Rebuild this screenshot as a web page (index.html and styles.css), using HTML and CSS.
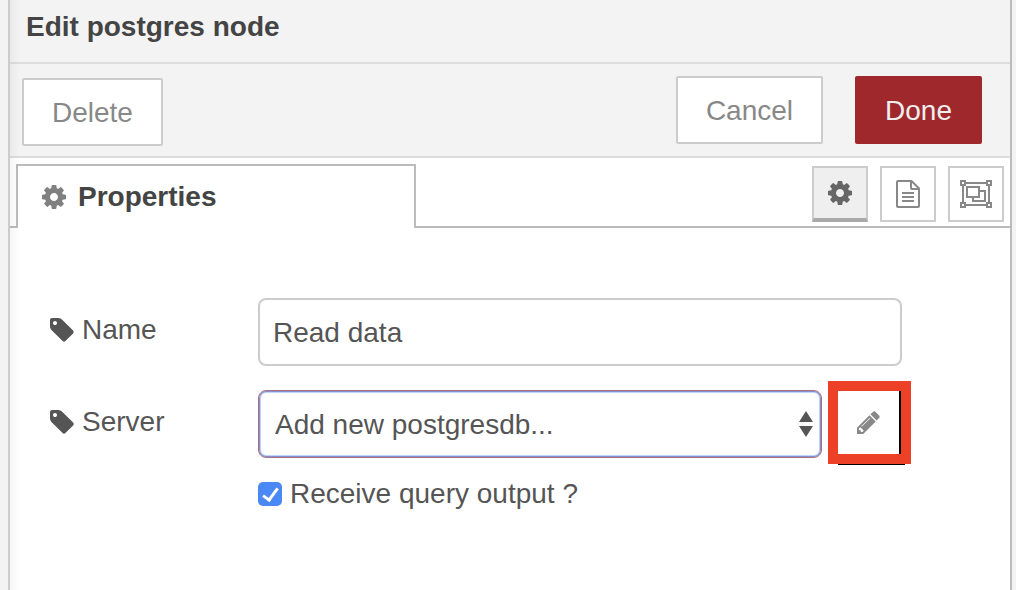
FILE: index.html
```html
<!DOCTYPE html>
<html lang="en">
<head>
<meta charset="utf-8">
<title>Edit postgres node</title>
<link rel="stylesheet" href="styles.css">
</head>
<body>
<svg class="sprite" aria-hidden="true">
  <symbol id="cog" viewBox="128 128 1536 1536"><path d="M1152 896q0-106-75-181t-181-75-181 75-75 181 75 181 181 75 181-75 75-181zm512-109v222q0 12-8 23t-20 13l-185 28q-19 54-39 91 35 50 107 138 10 12 10 25t-9 23q-27 37-99 108t-94 71q-12 0-26-9l-138-108q-44 23-91 38-16 136-29 186-7 28-36 28h-222q-14 0-24.5-8.5t-11.5-21.5l-28-184q-49-16-90-37l-141 107q-10 9-25 9-14 0-25-11-126-114-165-168-7-10-7-23 0-12 8-23 15-21 51-66.5t54-70.5q-27-50-41-99l-183-27q-13-2-21-12.5t-8-23.5v-222q0-12 8-23t19-13l186-28q14-46 39-92-40-57-107-138-10-12-10-24 0-10 9-23 26-36 98.5-107.5t94.5-71.5q13 0 26 10l138 107q44-23 91-38 16-136 29-186 7-28 36-28h222q14 0 24.5 8.5t11.5 21.5l28 184q49 16 90 37l142-107q9-9 24-9 13 0 25 10 129 119 165 170 7 8 7 22 0 12-8 23-15 21-51 66.5t-54 70.5q26 50 41 98l183 28q13 2 21 12.5t8 23.5z"/></symbol>
  <symbol id="tag" viewBox="128 128 1536 1536"><path d="M576 448q0-53-37.5-90.5t-90.5-37.5-90.5 37.5-37.5 90.5 37.5 90.5 90.5 37.5 90.5-37.5 37.5-90.5zm1067 576q0 53-37 90l-491 492q-39 37-91 37-53 0-90-37l-715-716q-38-37-64.500-101t-26.500-117v-416q0-52 38-90t90-38h416q53 0 117 26.500t102 64.500l715 714q37 39 37 91z"/></symbol>
  <symbol id="pencil" viewBox="128 128 1536 1536"><path d="M491 1536l91-91-235-235-91 91v107h128v128h107zm523-928q0-22-22-22-10 0-17 7l-542 542q-7 7-7 17 0 22 22 22 10 0 17-7l542-542q7-7 7-17zm-54-192l416 416-832 832h-416v-416zm683 96q0 53-37 90l-166 166-416-416 166-165q36-38 90-38 53 0 91 38l235 234q37 39 37 91z"/></symbol>
</svg>
<main class="tray">
  <header class="tray-header"><h1 class="title">Edit postgres node</h1></header>
  <div class="toolbar">
    <button class="btn btn-delete" type="button">Delete</button>
    <div class="toolbar-end">
      <button class="btn" type="button">Cancel</button>
      <button class="btn btn-primary" type="button">Done</button>
    </div>
  </div>
  <nav class="tabs">
    <button class="tab" type="button"><svg class="icon"><use href="#cog"/></svg>Properties</button>
    <div class="tab-actions">
      <button class="square selected" type="button" aria-label="Properties"><svg class="icon"><use href="#cog"/></svg></button>
      <button class="square" type="button" aria-label="Description">
        <svg class="icon-doc" viewBox="0 0 24 28" fill="none" stroke="currentColor" stroke-width="2"><path d="M2 1H15.500L23 8.500V26Q23 27 22 27H2Q1 27 1 26V2Q1 1 2 1Z"/><path d="M15 1V8Q15 9 16 9H23"/><path d="M6 13H18M6 17H18M6 21H18"/></svg>
      </button>
      <button class="square" type="button" aria-label="Appearance">
        <svg class="icon-group" viewBox="0 0 32 28" fill="none" stroke="currentColor" stroke-width="2"><path d="M6 3H26M6 25H26M3 6V22M29 6V22"/><path d="M1 1H5V5H1ZM27 1H31V5H27ZM1 23H5V27H1ZM27 23H31V27H27Z"/><path d="M7 7H19V17H7ZM19 11H25V21H13V17"/></svg>
      </button>
    </div>
  </nav>
  <form class="form">
    <div class="row">
      <label class="label" for="name"><svg class="icon"><use href="#tag"/></svg>Name</label>
      <input class="field text" id="name" type="text" value="Read data">
    </div>
    <div class="row">
      <label class="label" for="server"><svg class="icon"><use href="#tag"/></svg>Server</label>
      <div class="select-wrap">
        <select class="field select" id="server"><option>Add new postgresdb...</option></select>
        <svg class="arrows" viewBox="0 0 14 26" aria-hidden="true"><path d="M7 0L14 11H0ZM0 15H14L7 26Z"/></svg>
      </div>
      <button class="edit" type="button" aria-label="Edit server"><svg class="icon pencil"><use href="#pencil"/></svg></button>
    </div>
    <div class="row check-row">
      <input class="check" id="output" type="checkbox" checked>
      <label for="output">Receive query output ?</label>
    </div>
  </form>
</main>
</body>
</html>
```
FILE: styles.css
```css
*, *::before, *::after { box-sizing: border-box; }

body {
  margin: 0;
  padding: 0 4px 0 8px;
  background: #f3f3f3;
  color: #555;
  font: 28px/40px "Liberation Sans", Arial, sans-serif;
}

button, input, select { font: inherit; color: inherit; margin: 0; }

.sprite { position: absolute; width: 0; height: 0; }
.icon { width: 24px; height: 24px; fill: currentColor; flex: none; }

.tray {
  position: relative;
  min-height: 100vh;
  background: #fff;
  border-left: 2px solid #ccc;
  border-right: 2px solid #bbb;
}

.tray::before {
  content: "";
  position: absolute;
  inset: 0 auto 0 0;
  width: 10px;
  background: linear-gradient(to right, rgba(0, 0, 0, .04), transparent);
  pointer-events: none;
}

.tray-header {
  padding: 7px 16px 15px;
  background: #f3f3f3;
  border-bottom: 2px solid #ddd;
}

.title { margin: 0; font-size: 28px; line-height: 40px; color: #444; }

.toolbar {
  display: flex;
  justify-content: space-between;
  padding: 12px 28px 12px 12px;
  background: #f3f3f3;
  border-bottom: 2px solid #ddd;
}

.toolbar-end { display: flex; gap: 32px; }

.btn {
  height: 68px;
  padding: 1px 28px 0;
  background: #fff;
  border: 2px solid #ccc;
  border-radius: 2px;
  color: #888;
}

.btn-delete { margin-top: 2px; margin-bottom: -2px; }
.btn-primary { background: #9f282d; border-color: #9f282d; color: #eee; }

.tabs {
  display: flex;
  justify-content: space-between;
  align-items: flex-start;
  padding: 6px 6px 0;
  height: 70px;
  border-bottom: 2px solid #bbb;
}

.tab {
  display: flex;
  align-items: center;
  gap: 12px;
  width: 400px;
  height: 64px;
  padding: 0 24px;
  background: #fff;
  border: 2px solid #bbb;
  border-bottom: 0;
  color: #444;
  font-weight: bold;
}

.tab .icon { color: #808080; }

.tab-actions { display: flex; gap: 12px; padding-top: 2px; }

.square {
  display: flex;
  align-items: center;
  justify-content: center;
  width: 56px;
  height: 56px;
  padding: 0;
  background: #fff;
  border: 2px solid #ccc;
  color: #888;
}

.square.selected { background: #efefef; border-bottom: 4px solid #aaa; color: #666; }
.icon-doc { width: 24px; height: 28px; }
.icon-group { width: 32px; height: 28px; }

.form {
  display: flex;
  flex-direction: column;
  gap: 24px;
  padding: 70px 40px 40px;
}

.row { display: flex; align-items: center; }

.label {
  display: flex;
  align-items: center;
  gap: 8px;
  width: 208px;
  height: 68px;
  padding-bottom: 4px;
}

.field {
  height: 68px;
  background: #fff;
  border: 2px solid #ccc;
  border-radius: 8px;
  outline: 0;
}

.text { width: 70%; padding: 1px 13px 0; }

.select-wrap { position: relative; width: calc(70% - 80px); height: 68px; }

.select {
  appearance: none;
  width: 100%;
  padding: 1px 16px 0;
  border: 1px solid #b06f80;
  box-shadow: inset 0 0 0 1px #7f92cd, inset 0 0 0 2px #bdd5f8;
}

.arrows {
  position: absolute;
  right: 9px;
  top: 21px;
  width: 14px;
  height: 26px;
  fill: #555;
  pointer-events: none;
}

.edit {
  position: relative;
  display: flex;
  align-items: center;
  justify-content: center;
  width: 83px;
  height: 83px;
  margin: -9px 0 -6px 6px;
  padding: 0 2px 0 0;
  background: #fff;
  border: 10px solid #ec4027;
  box-shadow: inset -2px 0 #000;
  color: #888;
}

.pencil { width: 23px; height: 23px; }

.edit::after {
  content: "";
  position: absolute;
  left: 0;
  right: -4px;
  bottom: -11px;
  height: 1px;
  background: #000;
}

.check-row { gap: 8px; padding-left: 208px; margin-top: -8px; }

.check {
  position: relative;
  appearance: none;
  width: 24px;
  height: 24px;
  background: #4a88f5;
  border-radius: 5px;
}

.check:checked::after {
  content: "";
  position: absolute;
  left: 8px;
  top: 3px;
  width: 9px;
  height: 16px;
  border: solid #fff;
  border-width: 0 3px 3px 0;
  transform: rotate(36deg);
}
```
